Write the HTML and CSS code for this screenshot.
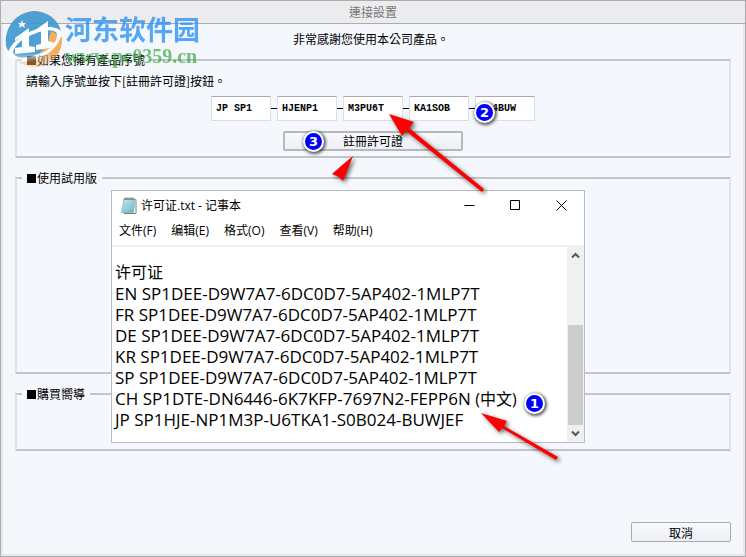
FILE: index.html
```html
<!DOCTYPE html>
<html lang="zh-Hant">
<head>
<meta charset="utf-8">
<title>連接設置</title>
<link rel="stylesheet" href="styles.css">
</head>
<body>
<main class="dialog">
  <header class="titlebar"><h1>連接設置</h1></header>
  <div class="content">
    <p class="thanks">非常感謝您使用本公司產品。</p>
    <fieldset class="group group-serial">
      <legend><span class="mark mark-faded"></span>如果您擁有產品序號</legend>
      <p class="hint">請輸入序號並按下[註冊許可證]按鈕。</p>
      <div class="serial">
        <input type="text" value="JP SP1" aria-label="序號 1">
        <span class="dash"></span>
        <input type="text" value="HJENP1" aria-label="序號 2">
        <span class="dash"></span>
        <input type="text" value="M3PU6T" aria-label="序號 3">
        <span class="dash"></span>
        <input type="text" value="KA1SOB" aria-label="序號 4">
        <span class="dash"></span>
        <input type="text" value="024BUW" aria-label="序號 5">
      </div>
      <button type="button" class="btn register">註冊許可證</button>
    </fieldset>
    <fieldset class="group group-trial">
      <legend><span class="mark"></span>使用試用版</legend>
    </fieldset>
    <fieldset class="group group-buy">
      <legend><span class="mark"></span>購買嚮導</legend>
    </fieldset>
    <footer class="actions"><button type="button" class="btn cancel">取消</button></footer>
  </div>
</main>

<section class="notepad" lang="zh-Hans">
  <header class="np-title">
    <svg class="np-icon" width="16" height="18" viewBox="0 0 16 18" aria-hidden="true">
      <defs><linearGradient id="page" x1="0" y1="0" x2="1" y2="1"><stop offset="0" stop-color="#d3f0f5"/><stop offset="1" stop-color="#58abc0"/></linearGradient></defs>
      <path d="M3 2.500H15V16.500H3Z" fill="#fff" stroke="#8a805f"/>
      <path d="M3 2H14L12.500 15.500H.5Z" fill="url(#page)" stroke="#78b3bf" stroke-width=".7"/>
      <path d="M3 6H13M3 8H13M2.500 10H12.500M2 12H12" stroke="#9ed4df" stroke-width=".6"/>
      <path d="M4 .5V3M6 .5V3M8 .5V3M10 .5V3M12 .5V3" stroke="#555"/>
    </svg>
    <span class="np-name">许可证.txt - 记事本</span>
    <div class="np-controls">
      <button type="button" aria-label="最小化"><svg width="11" height="11" viewBox="0 0 11 11"><path d="M.5 5.500H10.500" /></svg></button>
      <button type="button" aria-label="最大化"><svg width="11" height="11" viewBox="0 0 11 11"><path d="M.5 .5H9.500V9.500H.5Z" /></svg></button>
      <button type="button" aria-label="关闭"><svg width="11" height="11" viewBox="0 0 11 11"><path d="M.5 .5L10.500 10.500M10.500 .5L.5 10.500" /></svg></button>
    </div>
  </header>
  <nav class="np-menu">
    <button type="button">文件(F)</button>
    <button type="button">编辑(E)</button>
    <button type="button">格式(O)</button>
    <button type="button">查看(V)</button>
    <button type="button">帮助(H)</button>
  </nav>
  <div class="np-body">
    <div class="np-text">
      <p class="np-heading">许可证</p>
      <p>EN SP1DEE-D9W7A7-6DC0D7-5AP402-1MLP7T</p>
      <p>FR SP1DEE-D9W7A7-6DC0D7-5AP402-1MLP7T</p>
      <p>DE SP1DEE-D9W7A7-6DC0D7-5AP402-1MLP7T</p>
      <p>KR SP1DEE-D9W7A7-6DC0D7-5AP402-1MLP7T</p>
      <p>SP SP1DEE-D9W7A7-6DC0D7-5AP402-1MLP7T</p>
      <p>CH SP1DTE-DN6446-6K7KFP-7697N2-FEPP6N <span class="np-note">(中文)</span></p>
      <p>JP SP1HJE-NP1M3P-U6TKA1-S0B024-BUWJEF</p>
    </div>
    <div class="np-scroll">
      <svg width="9" height="7" viewBox="0 0 9 7"><path d="M1 5.500L4.500 2L8 5.500"/></svg>
      <span class="thumb"></span>
      <svg width="9" height="7" viewBox="0 0 9 7"><path d="M1 1.500L4.500 5L8 1.500"/></svg>
    </div>
  </div>
</section>

<svg class="arrows" width="746" height="557" viewBox="0 0 746 557" aria-hidden="true">
  <g class="arrow">
    <path d="M389 114L414 122L409 128L484 189L482 192L406 131L402 136Z"/>
    <path d="M353 156L343 181L339 177L332 174Q342 165 353 156Z"/>
    <path d="M481 413L507 421L504 426L558 457L556 460L502 428L499 432Z"/>
  </g>
</svg>
<span class="badge badge-1">1</span>
<span class="badge badge-2">2</span>
<span class="badge badge-3">3</span>

<div class="watermark" lang="zh-Hans">
  <svg width="58" height="58" viewBox="0 0 58 58" aria-hidden="true">
    <path d="M1 35C-1 17 10 2 28 0C42 0 53 8 56 20C50 15 40 15 29 20C16 26 7 34 5 42C3 40 2 38 1 35Z" fill="#3d98d0"/>
    <path d="M57 25C58 42 48 55 32 56C25 56 17 54 12 50C28 51 46 42 57 25Z" fill="#f5a54c"/>
    <path d="M2 44C5 32 17 23 32 18C44 14 53 16 57 22C55 34 42 47 26 50C14 52 5 50 2 44Z" fill="#fff"/>
    <path d="M8 41C10 33 19 27 29 23C41 18 50 18 52 23C51 32 41 41 28 45C17 48 10 47 8 41Z" fill="#3d98d0"/>
    <path d="M34 43C46 39 52 31 52 23L46 20L42 34Z" fill="#f5a54c"/>
    <path d="M10 27L24 17V35L30 36V41L10 43V37L17 36V25L10 30Z M29 20L43 10V30L50 32L45 37L31 39V34L36 33V18L29 23Z" fill="#fff"/>
    <path d="M17 9L18 12L21 12L19 14L20 17L17 15L14 17L15 14L13 12L16 12Z" fill="#fff"/>
  </svg>
  <div class="wm-text">
    <span class="wm-name">河东软件园</span>
    <span class="wm-url">www.pc0359.cn</span>
  </div>
</div>
</body>
</html>
```
FILE: styles.css
```css
* { box-sizing: border-box; }
body {
  margin: 0;
  position: relative;
  background: #f4f7fc;
  color: #000;
  font: 12px/16px "Noto Sans CJK TC", sans-serif;
}
p, h1 { margin: 0; font-size: 12px; font-weight: 400; }
button, input { font: inherit; color: inherit; }
.dialog {
  display: flex;
  flex-direction: column;
  min-height: 100vh;
  border: 1px solid #acacae;
  box-shadow: inset 0 0 0 2px #e8e8eb;
}
.titlebar {
  height: 23px;
  padding-top: 3px;
  background: #ececee;
  border-bottom: 1px solid #acacae;
  text-align: center;
}
.titlebar h1 { color: #777; }
.content {
  flex: 1;
  display: flex;
  flex-direction: column;
  padding: 7px 14px 14px;
}
.thanks { text-align: center; margin-bottom: 5px; padding-right: 4px; }
.group {
  min-width: 0;
  margin: 0 0 12px;
  padding: 0 9px;
  border: 2px solid;
  border-color: #c2c4c9 #dfe1e6 #c2c4c9 #dfe1e6;
}
.group legend {
  display: flex;
  align-items: center;
  gap: 1px;
  height: 16px;
  margin-left: -4px;
  padding: 0 5px;
}
.mark { width: 9px; height: 9px; background: #000; }
.mark-faded { background: #4b2c12; }
.group-serial { height: 106px; }
.group-trial { height: 204px; }
.group-buy { height: 65px; }
.hint { margin: 5px 0 7px; }
.serial { display: flex; justify-content: center; align-items: center; }
.serial input {
  width: 60px;
  height: 25px;
  padding: 0 4px;
  border: 1px solid #dcdee2;
  border-top-color: #a9abb0;
  background: #fff;
  font: bold 10px "Liberation Mono", monospace;
}
.dash { width: 6px; height: 1px; background: #000; }
.btn {
  display: block;
  height: 20px;
  padding: 0;
  border: 1px solid #a7a9ae;
  border-radius: 2px;
  background: linear-gradient(#f7f9fd, #eef0f5);
  line-height: 17px;
}
.register { width: 180px; margin: 10px auto 0; border-width: 2px; border-color: #b6b8bd; line-height: 14px; }
.actions { margin-top: auto; display: flex; justify-content: flex-end; }
.cancel { width: 100px; }

.notepad {
  position: absolute;
  left: 111px;
  top: 190px;
  width: 474px;
  border: 1px solid #bbbcc0;
  background: #fff;
  font-family: "Open Sans", "Noto Sans CJK SC", sans-serif;
}
.np-title { display: flex; align-items: center; height: 29px; padding-left: 9px; gap: 4px; }
.np-controls { margin-left: auto; display: flex; }
.np-controls button {
  display: grid;
  place-items: center;
  width: 46px;
  height: 29px;
  padding: 0;
  border: 0;
  background: none;
}
.np-controls path { fill: none; stroke: #000; }
.np-menu { display: flex; gap: 15px; height: 27px; padding: 2px 7px; border-bottom: 2px solid #f0f0f0; }
.np-menu button { height: 18px; padding: 0; border: 0; background: none; line-height: 18px; }
.np-body { display: flex; }
.np-text { flex: 1; padding: 15px 0 12px 3px; line-height: 21px; white-space: nowrap; }
.np-text p { font-size: 17px; height: 21px; }
.np-text .np-heading, .np-note { font-size: 16px; }
.np-scroll { width: 17px; display: flex; flex-direction: column; align-items: center; background: #f0f0f0; padding: 5px 0; }
.np-scroll path { fill: none; stroke: #555; stroke-width: 2; }
.thumb { width: 15px; height: 100px; margin: auto 0 5px; background: #cdcdcd; }

.arrows { position: absolute; left: 0; top: 0; }
.arrow { fill: #fe0000; filter: drop-shadow(2px 2px 2px rgba(0, 0, 0, .6)); }
.badge {
  position: absolute;
  width: 21px;
  height: 21px;
  border: 2px solid #fff;
  border-radius: 50%;
  background: #00f;
  box-shadow: 1px 1px 3px 1px rgba(0, 0, 0, .6);
  color: #fff;
  font: bold 13px/17px "DejaVu Sans", sans-serif;
  text-align: center;
}
.badge-1 { left: 524px; top: 393px; }
.badge-2 { left: 474px; top: 102px; }
.badge-3 { left: 303px; top: 131px; }

.watermark { position: absolute; left: 5px; top: 11px; display: flex; gap: 2px; }
.watermark svg {
  opacity: .9;
  -webkit-mask-image: linear-gradient(#000 72%, rgba(0, 0, 0, .4) 84%);
  mask-image: linear-gradient(#000 72%, rgba(0, 0, 0, .4) 84%);
}
.wm-text { display: flex; flex-direction: column; padding-top: 2px; }
.wm-name { color: #2f93f5; font: bold 27px/32px "Noto Sans CJK SC", sans-serif; opacity: .8; }
.wm-url { color: #2fa336; font: bold 20px/22px "Liberation Serif", serif; opacity: .65; }
```
